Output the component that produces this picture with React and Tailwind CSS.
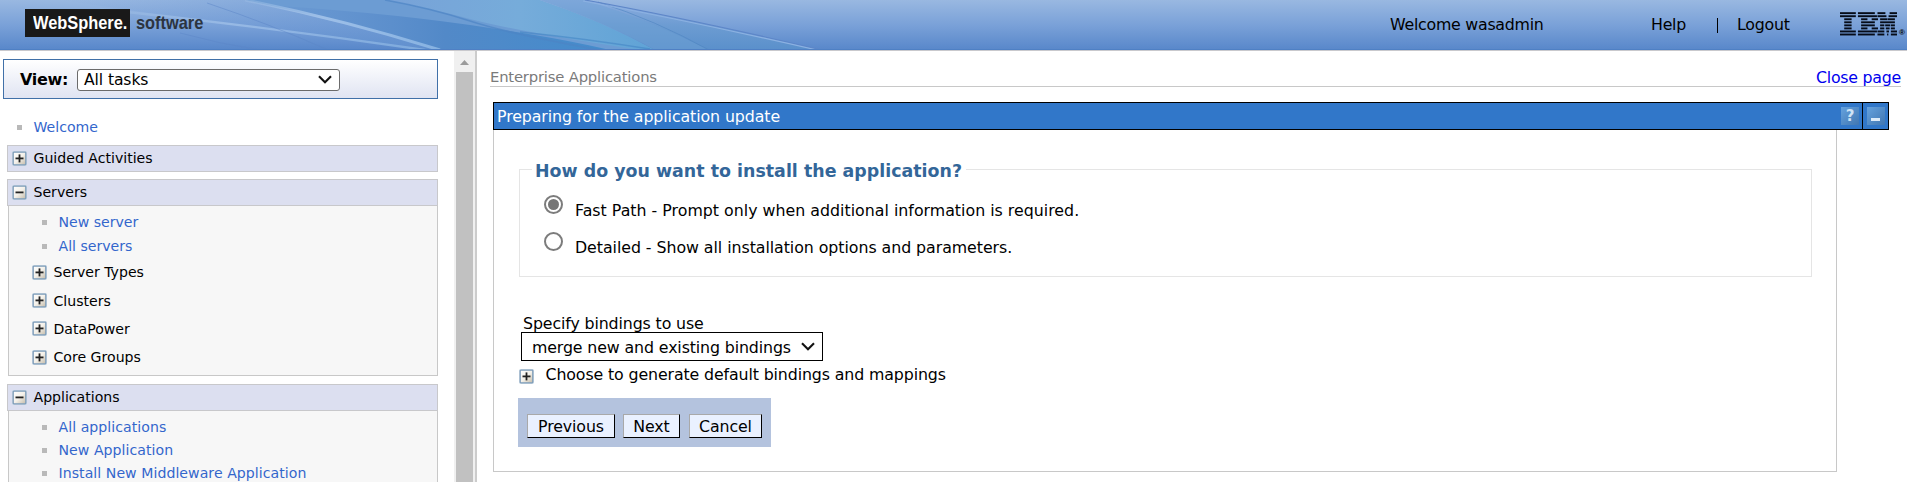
import React from 'react';

const BODY_FONT = "font-['DejaVu_Sans',sans-serif]";

function Toggle({ open = false }) {
  return (
    <svg width="15" height="15" viewBox="0 0 15 15" className="block shrink-0">
      <defs>
        <linearGradient id="toggleFill" x1="0" y1="0" x2="1" y2="1">
          <stop offset="0" stopColor="#ffffff" />
          <stop offset="0.5" stopColor="#f4f1ea" />
          <stop offset="1" stopColor="#c3baa8" />
        </linearGradient>
      </defs>
      <rect x="0.2" y="0.2" width="14.6" height="14.6" rx="1" fill="#c3d4e2" />
      <rect x="1.2" y="1.2" width="12.6" height="12.6" rx="0.8" fill="url(#toggleFill)" stroke="#7f9db9" strokeWidth="1.3" />
      <path d="M3.5 7.4H11.5" stroke="#222" strokeWidth="1.8" />
      {!open && <path d="M7.5 3.4V11.4" stroke="#222" strokeWidth="1.8" />}
    </svg>
  );
}

function Chevron() {
  return (
    <svg width="14" height="9" viewBox="0 0 14 9" className="block shrink-0">
      <path d="M1 1.3L7 7.2L13 1.3" fill="none" stroke="#111" strokeWidth="2.1" />
    </svg>
  );
}

function NavLink({ children, className }) {
  return (
    <div className={'flex items-center ' + className}>
      <span className="mr-[11.5px] size-[5px] shrink-0 bg-[#b9b9b9]" />
      <a className="whitespace-nowrap text-[#3366cc]">{children}</a>
    </div>
  );
}

function NavHeader({ children, open }) {
  return (
    <div className="ml-[7px] flex h-[27px] w-[431px] items-center gap-[6.5px] border border-[#c8c8cb] bg-[#dcdff0] pl-1">
      <div className="-mt-px"><Toggle open={open} /></div>
      <span className="-mt-px">{children}</span>
    </div>
  );
}

const IBM_ROWS = [
  [[0, 15], [17, 33], [35.5, 43], [47, 54]],
  [[0, 15], [17, 35], [35.5, 44], [46, 54]],
  [[4, 11], [20, 26], [30, 36], [38, 45], [45.3, 52]],
  [[4, 11], [20, 33], [38, 52]],
  [[4, 11], [20, 33], [38, 42], [42.8, 47.6], [48.2, 52]],
  [[4, 11], [20, 26], [30, 36], [38, 42], [43.4, 47], [48.2, 52]],
  [[0, 15], [17, 35], [35.5, 42], [44, 46.4], [48.2, 54]],
  [[0, 15], [17, 33], [35.5, 42], [44.6, 45.8], [48.2, 54]],
];

function IbmLogo() {
  return (
    <svg width="57" height="24" viewBox="0 0 54 24" preserveAspectRatio="none" className="block">
      {IBM_ROWS.flatMap((row, y) =>
        row.map(([a, b]) => (
          <rect key={y + '-' + a} x={a} y={0.2 + y * 3.05} width={b - a} height="1.9" fill="#060c18" />
        ))
      )}
    </svg>
  );
}

function Swoosh() {
  return (
    <svg width="830" height="50" viewBox="0 0 830 50" className="absolute left-0 top-0">
      <defs>
        <linearGradient id="midBlue" x1="0" x2="1"><stop offset="0" stopColor="#5f8dcd" stopOpacity="0.2" /><stop offset="0.5" stopColor="#5289c8" /><stop offset="1" stopColor="#448ccc" /></linearGradient>
        <linearGradient id="teal" x1="0" x2="1"><stop offset="0" stopColor="#78a2d8" /><stop offset="0.5" stopColor="#76acda" /><stop offset="1" stopColor="#5fa3d6" /></linearGradient>
        <linearGradient id="leftBand" x1="0" x2="1"><stop offset="0" stopColor="#6f99d6" stopOpacity="0" /><stop offset="1" stopColor="#6594d0" /></linearGradient>
        <linearGradient id="rightBand" x1="0" y1="0" x2="0" y2="1"><stop offset="0" stopColor="#8eaee0" /><stop offset="0.5" stopColor="#6d9cd2" /><stop offset="1" stopColor="#5a90cb" /></linearGradient>
        <linearGradient id="ray" x1="0" x2="1"><stop offset="0" stopColor="#a9c7ea" stopOpacity="0.3" /><stop offset="0.4" stopColor="#a3c3ea" /><stop offset="1" stopColor="#8bb6e4" /></linearGradient>
      </defs>
      <path d="M60 0H245Q340 22 440 50H420Q300 32 150 13Z" fill="url(#leftBand)" opacity="0.7" />
      <path d="M245 0H400Q520 28 650 50H440Q340 20 245 0Z" fill="#6c9cd3" />
      <path d="M280 6Q400 14 490 28Q560 38 610 50H440Q350 22 280 6Z" fill="url(#midBlue)" />
      <path d="M385 0H540Q600 20 655 50H640Q520 32 470 19Q430 8 385 0Z" fill="url(#teal)" />
      <path d="M540 0H585Q690 19 820 50H655Q610 24 540 0Z" fill="url(#rightBand)" />
      <path d="M585 0Q650 20 709 50H655Q610 24 540 0Z" fill="#6ba0d4" opacity="0.5" />
      <path d="M385 0Q430 8 470 21T600 50" fill="none" stroke="#4d84c4" strokeWidth="1.6" opacity="0.7" />
      <path d="M520 32Q580 38 650 49" fill="none" stroke="#4386c4" strokeWidth="1.4" opacity="0.6" />
      <path d="M598 2Q655 20 709 50" fill="none" stroke="#4e85c2" strokeWidth="1" opacity="0.6" />
      <path d="M585 0Q690 19 822 50" fill="none" stroke="#5e86c8" strokeWidth="1.1" />
      <path d="M583 1Q690 21 817 50" fill="none" stroke="#8cb1e2" strokeWidth="1.2" />
      <path d="M100 9Q260 26 425 50" fill="none" stroke="url(#ray)" strokeWidth="2.4" opacity="0.7" />
      <path d="M245 0Q340 19 440 50" fill="none" stroke="url(#ray)" strokeWidth="3" opacity="0.9" />
      <path d="M207 3Q270 24 328 50" fill="none" stroke="#5b86c8" strokeWidth="1" opacity="0.5" />
      <path d="M180 33Q220 44 260 50" fill="none" stroke="#5b86c8" strokeWidth="1" opacity="0.5" />
    </svg>
  );
}

function Header() {
  return (
    <header className={'relative h-[51px] shrink-0 border-b border-[#c9c9cd] bg-linear-to-b from-[#99b8e1] via-[#7aa1d8] to-[#5887ca] text-[15.8px] tracking-[-0.25px] ' + BODY_FONT}>
      <Swoosh />
      <div className="relative flex h-[50px] items-center border-b border-[#4f80c4]">
        <div className="ml-[25px] -mt-[3px] flex h-7 items-center font-['Liberation_Sans',sans-serif] text-[18.5px] font-bold leading-none tracking-normal">
          <span className="flex h-7 w-[105px] items-center bg-[#191919] pl-2 text-white">
            <span className="origin-left scale-x-[0.885]">WebSphere.</span>
          </span>
          <span className="ml-[6px] w-[70px] origin-left scale-x-[0.885] text-[#2c3440]">software</span>
        </div>
        <span className="ml-[1184px] w-[261px] whitespace-nowrap">Welcome wasadmin</span>
        <span className="w-[66px]">Help</span>
        <span className="mt-[2px] h-[15px] w-px bg-black" />
        <span className="ml-[19px] w-[103px]">Logout</span>
        <div className="-mt-[2px] flex shrink-0 items-end">
          <IbmLogo />
          <span className="ml-[2px] -mb-[4px] font-['Liberation_Sans',sans-serif] text-[8px] font-bold leading-[14px]">®</span>
        </div>
      </div>
    </header>
  );
}

function Sidebar() {
  return (
    <aside className="flex w-[477px] shrink-0 overflow-hidden">
      <div className={'w-[454px] text-[14.1px] leading-none ' + BODY_FONT}>
        <div className="ml-[3px] mt-2 flex h-10 w-[435px] items-center border border-[#4070a8] bg-linear-to-b from-white to-[#e0e4f2] pl-4 pt-px">
          <span className="mt-px w-[57px] text-[16px] font-bold tracking-[-0.3px]">View:</span>
          <div className="flex h-[22px] w-[263px] items-center justify-between rounded-[3px] border border-[#6b6b6b] bg-white pl-[6px] pr-[7px] text-[15.6px] tracking-[-0.1px]">
            <span className="mt-[3px]">All tasks</span>
            <Chevron />
          </div>
        </div>
        <NavLink className="mt-[14px] mb-[4px] h-7 pl-[17px]">Welcome</NavLink>
        <NavHeader>Guided Activities</NavHeader>
        <div className="h-[7px]" />
        <NavHeader open>Servers</NavHeader>
        <div className="ml-2 h-[170px] w-[430px] border border-t-0 border-[#c8c8c8] bg-[#f7f7f7] pt-1">
          <NavLink className="h-6 pl-[33px]">New server</NavLink>
          <NavLink className="h-6 pl-[33px]">All servers</NavLink>
          {['Server Types', 'Clusters', 'DataPower', 'Core Groups'].map((name) => (
            <div key={name} className="flex h-[28.4px] items-center gap-[6.5px] pl-[23px]">
              <Toggle />
              <span>{name}</span>
            </div>
          ))}
        </div>
        <div className="h-2" />
        <NavHeader open>Applications</NavHeader>
        <div className="ml-2 w-[430px] border border-t-0 border-[#c8c8c8] bg-[#f7f7f7] pt-[5px]">
          {['All applications', 'New Application', 'Install New Middleware Application'].map((name) => (
            <NavLink key={name} className="h-[23px] pl-[33px] tracking-[0.05px]">{name}</NavLink>
          ))}
        </div>
      </div>
      <div className="flex w-[21px] flex-col items-center bg-[#f0f0f0]">
        <svg width="9" height="5" viewBox="0 0 9 5" className="mt-[9px] mb-[7px] shrink-0">
          <path d="M4.5 0L9 5H0Z" fill="#9b9b9b" />
        </svg>
        <div className="w-[17px] flex-1 bg-[#c1c1c1]" />
      </div>
      <div className="w-[2px] bg-[#cccccc]" />
    </aside>
  );
}

function TitleIcon({ children }) {
  return (
    <span className="flex size-[18px] items-center justify-center bg-linear-to-br from-[#65a2de] to-[#4177b2] text-[15px] font-bold leading-none text-[#cfe3f6]">
      {children}
    </span>
  );
}

function Radio({ checked }) {
  return (
    <span className="flex size-[19px] shrink-0 items-center justify-center rounded-full border-2 border-[#7c7c7c] bg-white">
      {checked && <span className="size-[11px] rounded-full bg-[#767676]" />}
    </span>
  );
}

function Button({ children, className }) {
  return (
    <button className={'flex h-6 items-center justify-center border border-b-black border-l-[#a9a9a9] border-r-black border-t-[#a9a9a9] bg-[#eaf1ff] pt-px ' + className}>
      {children}
    </button>
  );
}

function Main() {
  return (
    <main className={'flex-1 pl-[13px] text-[15.8px] leading-none tracking-[-0.12px] ' + BODY_FONT}>
      <div className="flex h-9 w-[1411px] items-center justify-between border-b border-[#c8c8c8] pt-[18px]">
        <span className="text-[14.8px] tracking-[-0.19px] text-[#7a7a7a]">Enterprise Applications</span>
        <a className="tracking-[-0.25px] text-[#0000ee]">Close page</a>
      </div>
      <div className="ml-[3px] mt-[15px] flex h-7 w-[1396px] items-stretch border border-black bg-[#3177c9] text-white">
        <span className="flex flex-1 items-center pl-[3px] pt-[2px] tracking-[-0.09px]">Preparing for the application update</span>
        <div className="flex items-center pr-[3px]"><TitleIcon>?</TitleIcon></div>
        <div className="flex w-[26px] items-center justify-center border-l border-black">
          <TitleIcon><span className="mt-[6px] h-[3px] w-[9px] bg-[#dcebf9]" /></TitleIcon>
        </div>
      </div>
      <section className="ml-[3px] flex h-[342px] w-[1344px] flex-col items-start border border-t-0 border-[#c8c8c8] pl-[25px]">
        <fieldset className="mt-[27px] h-[120px] w-[1293px] border border-[#e5e5e5] pl-3">
          <legend className="h-6 pl-[3px] pr-1 text-[17.4px] font-bold leading-[28px] tracking-[0.02px] text-[#336699]">
            How do you want to install the application?
          </legend>
          <div className="mt-[14px] flex h-[37px] items-start pl-3">
            <Radio checked />
            <span className="ml-3 mt-[8px] tracking-[0.01px]">Fast Path - Prompt only when additional information is required.</span>
          </div>
          <div className="flex h-[37px] items-start pl-3">
            <Radio />
            <span className="ml-3 mt-[8px] tracking-[-0.05px]">Detailed - Show all installation options and parameters.</span>
          </div>
        </fieldset>
        <label className="ml-1 mt-[38px] h-[17px] pt-px">Specify bindings to use</label>
        <div className="ml-[2px] flex h-[29px] w-[302px] items-center justify-between border border-black bg-white pl-[10px] pr-[7px]">
          <span className="mt-[2px]">merge new and existing bindings</span>
          <Chevron />
        </div>
        <div className="mt-[4px] flex items-center">
          <div className="mt-[4px]"><Toggle /></div>
          <span className="ml-[11.5px]">Choose to generate default bindings and mappings</span>
        </div>
        <div className="-ml-px mt-[14px] flex h-[49px] w-[253px] items-center bg-[#b4c3de] pl-[9px] pt-[7px]">
          <Button className="w-[88px]">Previous</Button>
          <Button className="ml-2 w-[57px]">Next</Button>
          <Button className="ml-[9px] w-[73px]">Cancel</Button>
        </div>
      </section>
    </main>
  );
}

export default function App() {
  return (
    <div className="flex h-[482px] w-[1907px] flex-col overflow-hidden bg-white text-black">
      <Header />
      <div className="flex min-h-0 flex-1">
        <Sidebar />
        <Main />
      </div>
    </div>
  );
}
